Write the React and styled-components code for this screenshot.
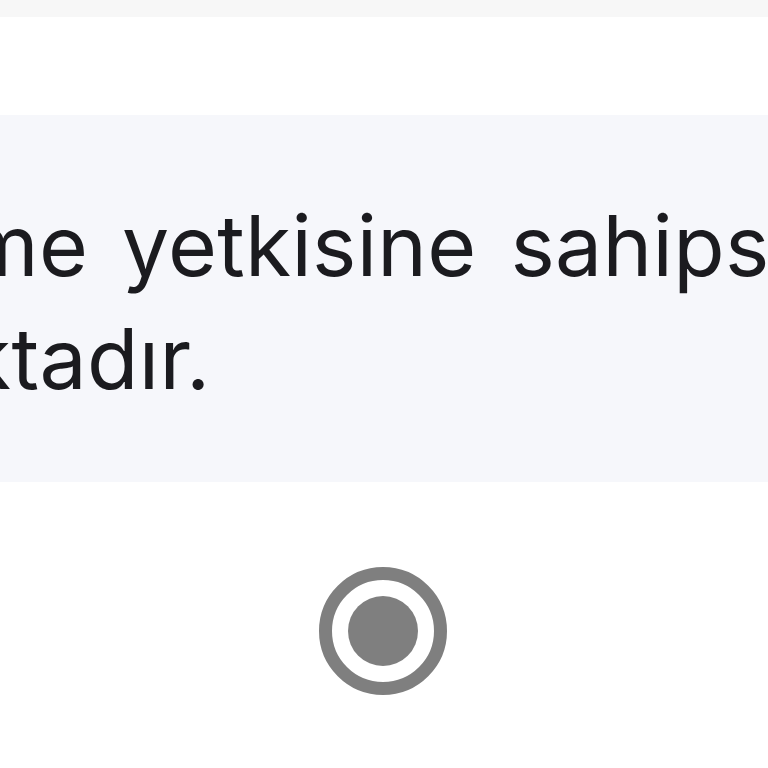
import React from "react";
import styled, { createGlobalStyle } from "styled-components";

const GlobalStyle = createGlobalStyle`
  html, body {
    margin: 0;
    padding: 0;
    background: #ffffff;
    font-family: Inter, "Noto Sans", "Liberation Sans", sans-serif;
  }
`;

// the paragraph is justified: the first line gets wider gaps between words
const lines = [
  { text: "me yetkisine sahipsiniz", wordGap: 10 },
  { text: "ktadır.", wordGap: 0 },
];

const App = () => {
  return (
    <SPage>
      <GlobalStyle />
      <STopBar />
      <SNotice>
        {lines.map((line) => (
          <SLine key={line.text} $wordGap={line.wordGap}>
            {line.text}
          </SLine>
        ))}
      </SNotice>
      <SRadioRow>
        <SRadio role="radio" aria-checked="true">
          <SRadioDot />
        </SRadio>
      </SRadioRow>
    </SPage>
  );
};

export default App;

const SPage = styled.div`
  width: 768px;
  height: 768px;
  overflow: hidden;
  display: flex;
  flex-direction: column;
`;

const STopBar = styled.div`
  height: 17px;
  background-color: #f7f7f7;
  margin-bottom: 98px;
`;

const SNotice = styled.div`
  background-color: #f6f7fb;
  padding: 74px 0 67px;
  overflow: hidden;
  color: #1b1b1f;
`;

const SLine = styled.div`
  margin-left: -35px;
  font-size: 84px;
  line-height: 113px;
  letter-spacing: 0.3px;
  word-spacing: ${(p) => p.$wordGap}px;
  white-space: nowrap;
`;

const SRadioRow = styled.div`
  display: flex;
  justify-content: center;
  padding-top: 85px;
`;

const SRadio = styled.div`
  width: 128px;
  height: 128px;
  box-sizing: border-box;
  border: 13px solid #7f7f7f;
  border-radius: 50%;
  display: flex;
  align-items: center;
  justify-content: center;
  margin-left: -2px;
`;

const SRadioDot = styled.div`
  width: 70px;
  height: 70px;
  border-radius: 50%;
  background-color: #7f7f7f;
`;
